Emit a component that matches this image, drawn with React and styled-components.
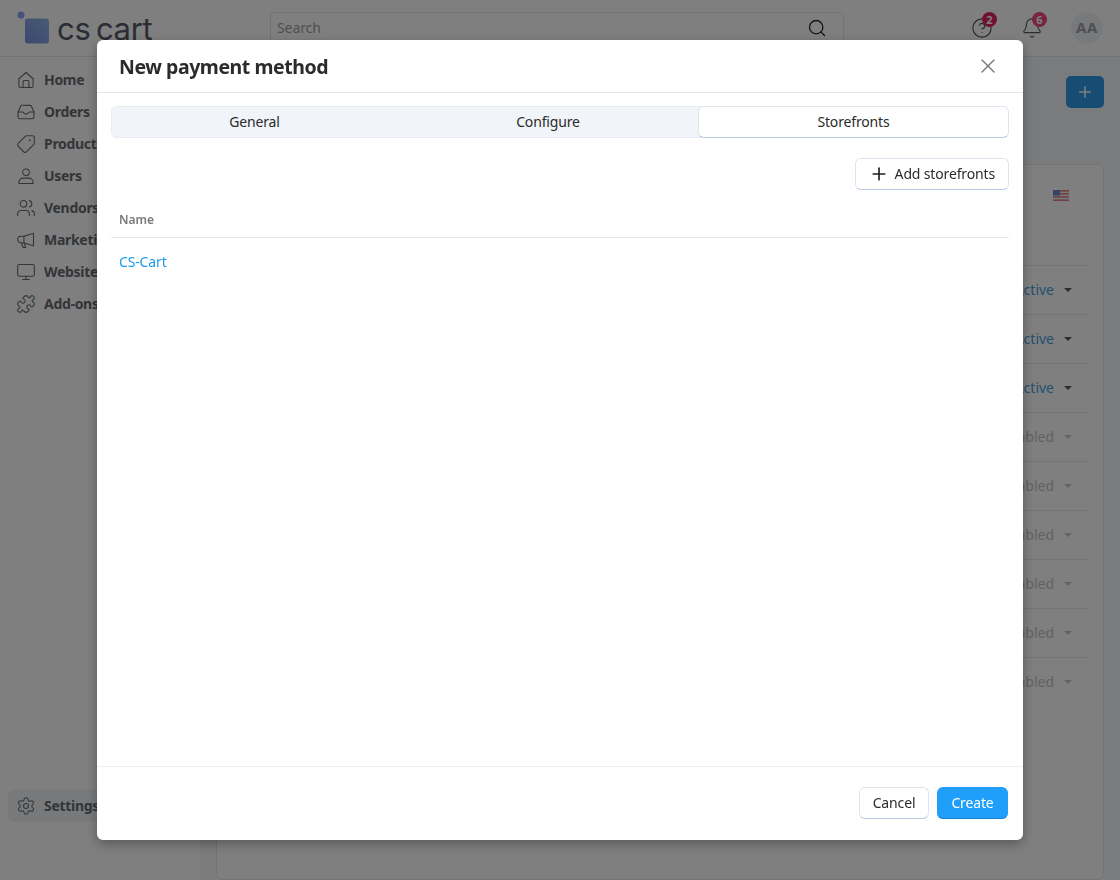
import styled, { createGlobalStyle } from "styled-components";
import { Bell, CircleHelp, Monitor, Plus, Puzzle, Search, Settings, Tag, Users, X } from "lucide-react";

const GlobalStyle = createGlobalStyle`
  html, body {
    margin: 0;
    padding: 0;
    height: 100%;
    overflow: hidden;
    background: #f3f6f9;
    font-family: "Noto Sans", sans-serif;
    color: #2b2b2b;
  }
  * { box-sizing: border-box; }
`;

const NavSvg = ({ children }) => (
  <svg
    width="20"
    height="20"
    viewBox="0 0 24 24"
    fill="none"
    stroke="currentColor"
    strokeWidth="1.3"
    strokeLinecap="round"
    strokeLinejoin="round"
  >
    {children}
  </svg>
);

const HomeIcon = () => (
  <NavSvg>
    <path d="M3.5 10.5 12 3l8.5 7.5V19a2 2 0 0 1-2 2h-13a2 2 0 0 1-2-2z" />
    <path d="M8.5 21v-7a1.5 1.5 0 0 1 1.5-1.5h4a1.5 1.5 0 0 1 1.5 1.5v7" />
  </NavSvg>
);

const TrayIcon = () => (
  <NavSvg>
    <path d="M2.5 12 5.5 5.2A2 2 0 0 1 7.3 4h9.4a2 2 0 0 1 1.8 1.2l3 6.8v6a2 2 0 0 1-2 2h-15a2 2 0 0 1-2-2z" />
    <path d="M2.5 12H8c.8 0 1 .6 1.4 1.2.5.8 1.4 1.3 2.6 1.3s2.100-.5 2.600-1.300c.4-.6.6-1.200 1.400-1.200h5.500" />
  </NavSvg>
);

const PersonIcon = () => (
  <NavSvg>
    <circle cx="12" cy="7.5" r="4" />
    <path d="M3.500 21v-1.500a5 5 0 0 1 5-5h7a5 5 0 0 1 5 5V21z" />
  </NavSvg>
);

const HornIcon = () => (
  <NavSvg>
    <path d="M21 4v15L9.500 15.500H6a3.500 3.500 0 0 1 0-8h3.500z" />
    <path d="M9.500 7.500v8" />
    <path d="M6.500 15.500 8.500 21h3l-1.500-5.200" />
  </NavSvg>
);

const FlippedTag = styled(Tag)`
  transform: scaleX(-1);
`;

const NAV = [
  { icon: <HomeIcon />, label: "Home" },
  { icon: <TrayIcon />, label: "Orders" },
  { icon: <FlippedTag size={20} strokeWidth={1.3} />, label: "Products" },
  { icon: <PersonIcon />, label: "Users" },
  { icon: <Users size={20} strokeWidth={1.3} />, label: "Vendors" },
  { icon: <HornIcon />, label: "Marketing" },
  { icon: <Monitor size={20} strokeWidth={1.3} />, label: "Websites" },
  { icon: <Puzzle size={20} strokeWidth={1.3} />, label: "Add-ons" },
];

const ROWS = ["Active", "Active", "Active", "Disabled", "Disabled", "Disabled", "Disabled", "Disabled", "Disabled"];

const Logo = () => (
  <LogoWrap>
    <svg width="36" height="36" viewBox="0 0 36 36">
      <defs>
        <linearGradient id="logoFill" x1="0" y1="1" x2="1" y2="0">
          <stop offset="0" stopColor="#7a8ee0" />
          <stop offset="1" stopColor="#8fb8ea" />
        </linearGradient>
      </defs>
      <circle cx="6" cy="5" r="3.500" fill="#8ca4f5" />
      <rect x="10" y="8.500" width="24" height="25" rx="3" fill="url(#logoFill)" />
    </svg>
    <LogoText>cs cart</LogoText>
  </LogoWrap>
);

export default function App() {
  return (
    <>
      <GlobalStyle />
      <Page>
        <Header>
          <Logo />
          <SearchBox>
            <SearchLabel>Search</SearchLabel>
            <Search size={20} strokeWidth={1.6} color="#2b2b2b" />
          </SearchBox>
          <HeaderActions>
            <IconSlot>
              <CircleHelp size={22} strokeWidth={1.3} />
              <Count $tone="#e0245e">2</Count>
            </IconSlot>
            <IconSlot>
              <Bell size={22} strokeWidth={1.3} />
              <Count $tone="#f0487c">6</Count>
            </IconSlot>
            <Avatar>AA</Avatar>
          </HeaderActions>
        </Header>
        <Body>
          <Sidebar>
            <NavList>
              {NAV.map((item) => (
                <NavItem key={item.label}>
                  {item.icon}
                  <NavLabel>{item.label}</NavLabel>
                </NavItem>
              ))}
            </NavList>
            <NavItem $active>
              <Settings size={20} strokeWidth={1.3} />
              <NavLabel>Settings</NavLabel>
            </NavItem>
          </Sidebar>
          <Main>
            <MainTop>
              <AddButton>
                <Plus size={18} strokeWidth={2} />
              </AddButton>
            </MainTop>
            <Card>
              <CardTop>
                <Flag>
                  <svg width="16" height="11" viewBox="0 0 16 11">
                    <rect width="16" height="11" fill="#f4f4f4" />
                    <rect width="16" height="1.600" fill="#e0808a" />
                    <rect y="3.100" width="16" height="1.600" fill="#e0808a" />
                    <rect y="6.200" width="16" height="1.600" fill="#e0808a" />
                    <rect y="9.400" width="16" height="1.600" fill="#e0808a" />
                    <rect width="7" height="5.600" fill="#6f86c8" />
                  </svg>
                </Flag>
              </CardTop>
              {ROWS.map((status, i) => (
                <Row key={i}>
                  <StatusText $off={status === "Disabled"}>{status}</StatusText>
                  <Caret $off={status === "Disabled"} />
                </Row>
              ))}
            </Card>
          </Main>
        </Body>
      </Page>

      <Backdrop />
      <Modal>
        <ModalHeader>
          <ModalTitle>New payment method</ModalTitle>
          <CloseButton>
            <X size={24} strokeWidth={1.4} />
          </CloseButton>
        </ModalHeader>
        <ModalBody>
          <Tabs>
            <Tab $width="287px">General</Tab>
            <Tab $width="300px">Configure</Tab>
            <Tab $active>Storefronts</Tab>
          </Tabs>
          <Toolbar>
            <OutlineButton>
              <Plus size={20} strokeWidth={2} color="#1f1f1f" />
              Add storefronts
            </OutlineButton>
          </Toolbar>
          <TableHead>Name</TableHead>
          <TableCell>
            <StoreLink href="#">CS-Cart</StoreLink>
          </TableCell>
        </ModalBody>
        <ModalFooter>
          <CancelButton>Cancel</CancelButton>
          <CreateButton>Create</CreateButton>
        </ModalFooter>
      </Modal>
    </>
  );
}

const Page = styled.div`
  width: 1120px;
  height: 880px;
  display: flex;
  flex-direction: column;
  overflow: hidden;
`;

const Header = styled.header`
  height: 57px;
  flex: none;
  display: flex;
  align-items: center;
  background: #fff;
  border-bottom: 1px solid #e2e6ea;
  padding: 0 17px 0 15px;
  color: #555a60;
`;

const LogoWrap = styled.div`
  width: 255px;
  display: flex;
  align-items: center;
  gap: 6px;
`;

const LogoText = styled.span`
  font-family: "Inter", sans-serif;
  font-size: 31px;
  letter-spacing: -0.3px;
  word-spacing: -3px;
  color: #555a66;
`;

const SearchBox = styled.div`
  width: 574px;
  height: 32px;
  display: flex;
  align-items: center;
  justify-content: space-between;
  padding: 0 16px 0 6px;
  border: 1px solid #e2e6ea;
  border-radius: 4px;
`;

const SearchLabel = styled.span`
  font-size: 14px;
  letter-spacing: -0.1px;
  padding-bottom: 2px;
  color: #9a9ea3;
`;

const HeaderActions = styled.div`
  margin-left: auto;
  display: flex;
  align-items: center;
  gap: 28px;
`;

const IconSlot = styled.div`
  position: relative;
  display: flex;
  color: #555a60;
`;

const Count = styled.span`
  position: absolute;
  top: -5px;
  right: -4px;
  width: 15px;
  height: 15px;
  border-radius: 50%;
  background: ${({ $tone }) => $tone};
  color: #fff;
  font-size: 11px;
  font-weight: 700;
  line-height: 15px;
  text-align: center;
`;

const Avatar = styled.div`
  width: 32px;
  height: 32px;
  border-radius: 50%;
  background: #f1f3f5;
  color: #9c9fa4;
  font-size: 15px;
  font-weight: 700;
  letter-spacing: 0.6px;
  line-height: 31px;
  text-align: center;
`;

const Body = styled.div`
  flex: 1;
  display: flex;
  min-height: 0;
`;

const Sidebar = styled.aside`
  width: 200px;
  flex: none;
  background: #fff;
  padding: 7px 8px 58px;
  display: flex;
  flex-direction: column;
  justify-content: space-between;
`;

const NavList = styled.nav`
  display: flex;
  flex-direction: column;
`;

const NavItem = styled.a`
  height: 32px;
  display: flex;
  align-items: center;
  gap: 8px;
  padding-left: 8px;
  border-radius: 6px;
  color: #666b71;
  background: ${({ $active }) => ($active ? "#f1f3f5" : "transparent")};
`;

const NavLabel = styled.span`
  font-size: 14px;
  font-weight: 700;
  letter-spacing: -0.3px;
  padding-bottom: 2px;
`;

const Main = styled.main`
  flex: 1;
  padding: 19px 16px 0;
  display: flex;
  flex-direction: column;
  background: #f3f6f9;
`;

const MainTop = styled.div`
  display: flex;
  justify-content: flex-end;
  margin-bottom: 56px;
`;

const AddButton = styled.button`
  width: 38px;
  height: 32px;
  border: 0;
  border-radius: 5px;
  background: #2f9be6;
  color: #fff;
  display: flex;
  align-items: center;
  justify-content: center;
`;

const Card = styled.section`
  flex: 1;
  background: #fff;
  border: 1px solid #e4e8ec;
  border-radius: 6px;
  padding: 0 15px 0 16px;
`;

const CardTop = styled.div`
  height: 100px;
  padding: 25px 19px 0 0;
  display: flex;
  justify-content: flex-end;
`;

const Flag = styled.div`
  display: flex;
  height: 11px;
`;

const Row = styled.div`
  height: 49px;
  border-top: 1px solid #e6e9ec;
  display: flex;
  align-items: center;
  justify-content: flex-end;
  gap: 10px;
  padding-right: 16px;
`;

const StatusText = styled.span`
  font-size: 14px;
  padding-bottom: 2px;
  color: ${({ $off }) => ($off ? "#c2c5c9" : "#4a9fe0")};
`;

const Caret = styled.span`
  width: 0;
  height: 0;
  border-left: 4px solid transparent;
  border-right: 4px solid transparent;
  border-top: 4px solid ${({ $off }) => ($off ? "#c2c5c9" : "#555a60")};
`;

const Backdrop = styled.div`
  position: fixed;
  inset: 0;
  background: rgba(0, 0, 0, 0.5);
`;

const Modal = styled.div`
  position: fixed;
  left: 97px;
  top: 40px;
  width: 926px;
  height: 800px;
  background: #fff;
  border-radius: 6px;
  box-shadow: 0 4px 12px rgba(0, 0, 0, 0.3);
  display: flex;
  flex-direction: column;
`;

const ModalHeader = styled.div`
  height: 53px;
  flex: none;
  border-bottom: 1px solid #e3e8ee;
  display: flex;
  align-items: center;
  justify-content: space-between;
  padding: 0 23px 0 22px;
`;

const ModalTitle = styled.h2`
  margin: 0;
  font-size: 19.5px;
  font-weight: 700;
  letter-spacing: -0.45px;
  color: #2b2b2b;
`;

const CloseButton = styled.button`
  border: 0;
  padding: 0;
  background: none;
  display: flex;
  color: #7a7a7a;
`;

const ModalBody = styled.div`
  flex: 1;
  padding: 13px 14px 0;
  display: flex;
  flex-direction: column;
`;

const Tabs = styled.div`
  height: 32px;
  display: flex;
  border-radius: 6px;
  background: #f1f4f9;
  box-shadow: inset 0 0 0 1px #e9edf3;
`;

const Tab = styled.div`
  flex: ${({ $width }) => ($width ? `0 0 ${$width}` : "1")};
  display: flex;
  align-items: center;
  justify-content: center;
  padding-bottom: 2px;
  font-size: 14px;
  letter-spacing: -0.15px;
  color: #2b2b2b;
  border-radius: 6px;
  ${({ $active }) =>
    $active &&
    `
    background: #fff;
    border: 1px solid #dfe5ee;
    border-bottom-color: #b9cbe3;
  `}
`;

const Toolbar = styled.div`
  display: flex;
  justify-content: flex-end;
  margin-top: 20px;
`;

const OutlineButton = styled.button`
  height: 32px;
  padding: 0 13px 2px;
  display: flex;
  align-items: center;
  gap: 6px;
  background: #fff;
  border: 1px solid #dfe5ee;
  border-bottom-color: #b9cbe3;
  border-radius: 6px;
  font-family: inherit;
  font-size: 14px;
  letter-spacing: -0.15px;
  color: #2b2b2b;

  svg {
    margin-top: 2px;
  }
`;

const TableHead = styled.div`
  height: 48px;
  padding: 12px 8px 0;
  display: flex;
  align-items: center;
  border-bottom: 1px solid #e3e8ee;
  font-size: 12px;
  font-weight: 600;
  color: #7a7a7a;
`;

const TableCell = styled.div`
  height: 48px;
  padding: 0 8px 2px;
  display: flex;
  align-items: center;
`;

const StoreLink = styled.a`
  font-size: 14px;
  letter-spacing: -0.15px;
  color: #1c9ae6;
  text-decoration: none;
`;

const ModalFooter = styled.div`
  height: 74px;
  flex: none;
  border-top: 1px solid #eceff3;
  padding: 0 15px 1px 0;
  display: flex;
  align-items: center;
  justify-content: flex-end;
  gap: 8px;
`;

const CancelButton = styled.button`
  width: 70px;
  height: 32px;
  padding: 0 0 1px;
  background: #fff;
  border: 1px solid #dfe5ee;
  border-bottom-color: #b9cbe3;
  border-radius: 6px;
  font-family: inherit;
  font-size: 14px;
  letter-spacing: -0.15px;
  color: #2b2b2b;
`;

const CreateButton = styled.button`
  width: 71px;
  height: 32px;
  padding: 0 0 1px;
  background: #1f9efa;
  border: 0;
  border-bottom: 1px solid #1683d4;
  border-radius: 6px;
  font-family: inherit;
  font-size: 14px;
  letter-spacing: -0.15px;
  color: #fff;
`;
